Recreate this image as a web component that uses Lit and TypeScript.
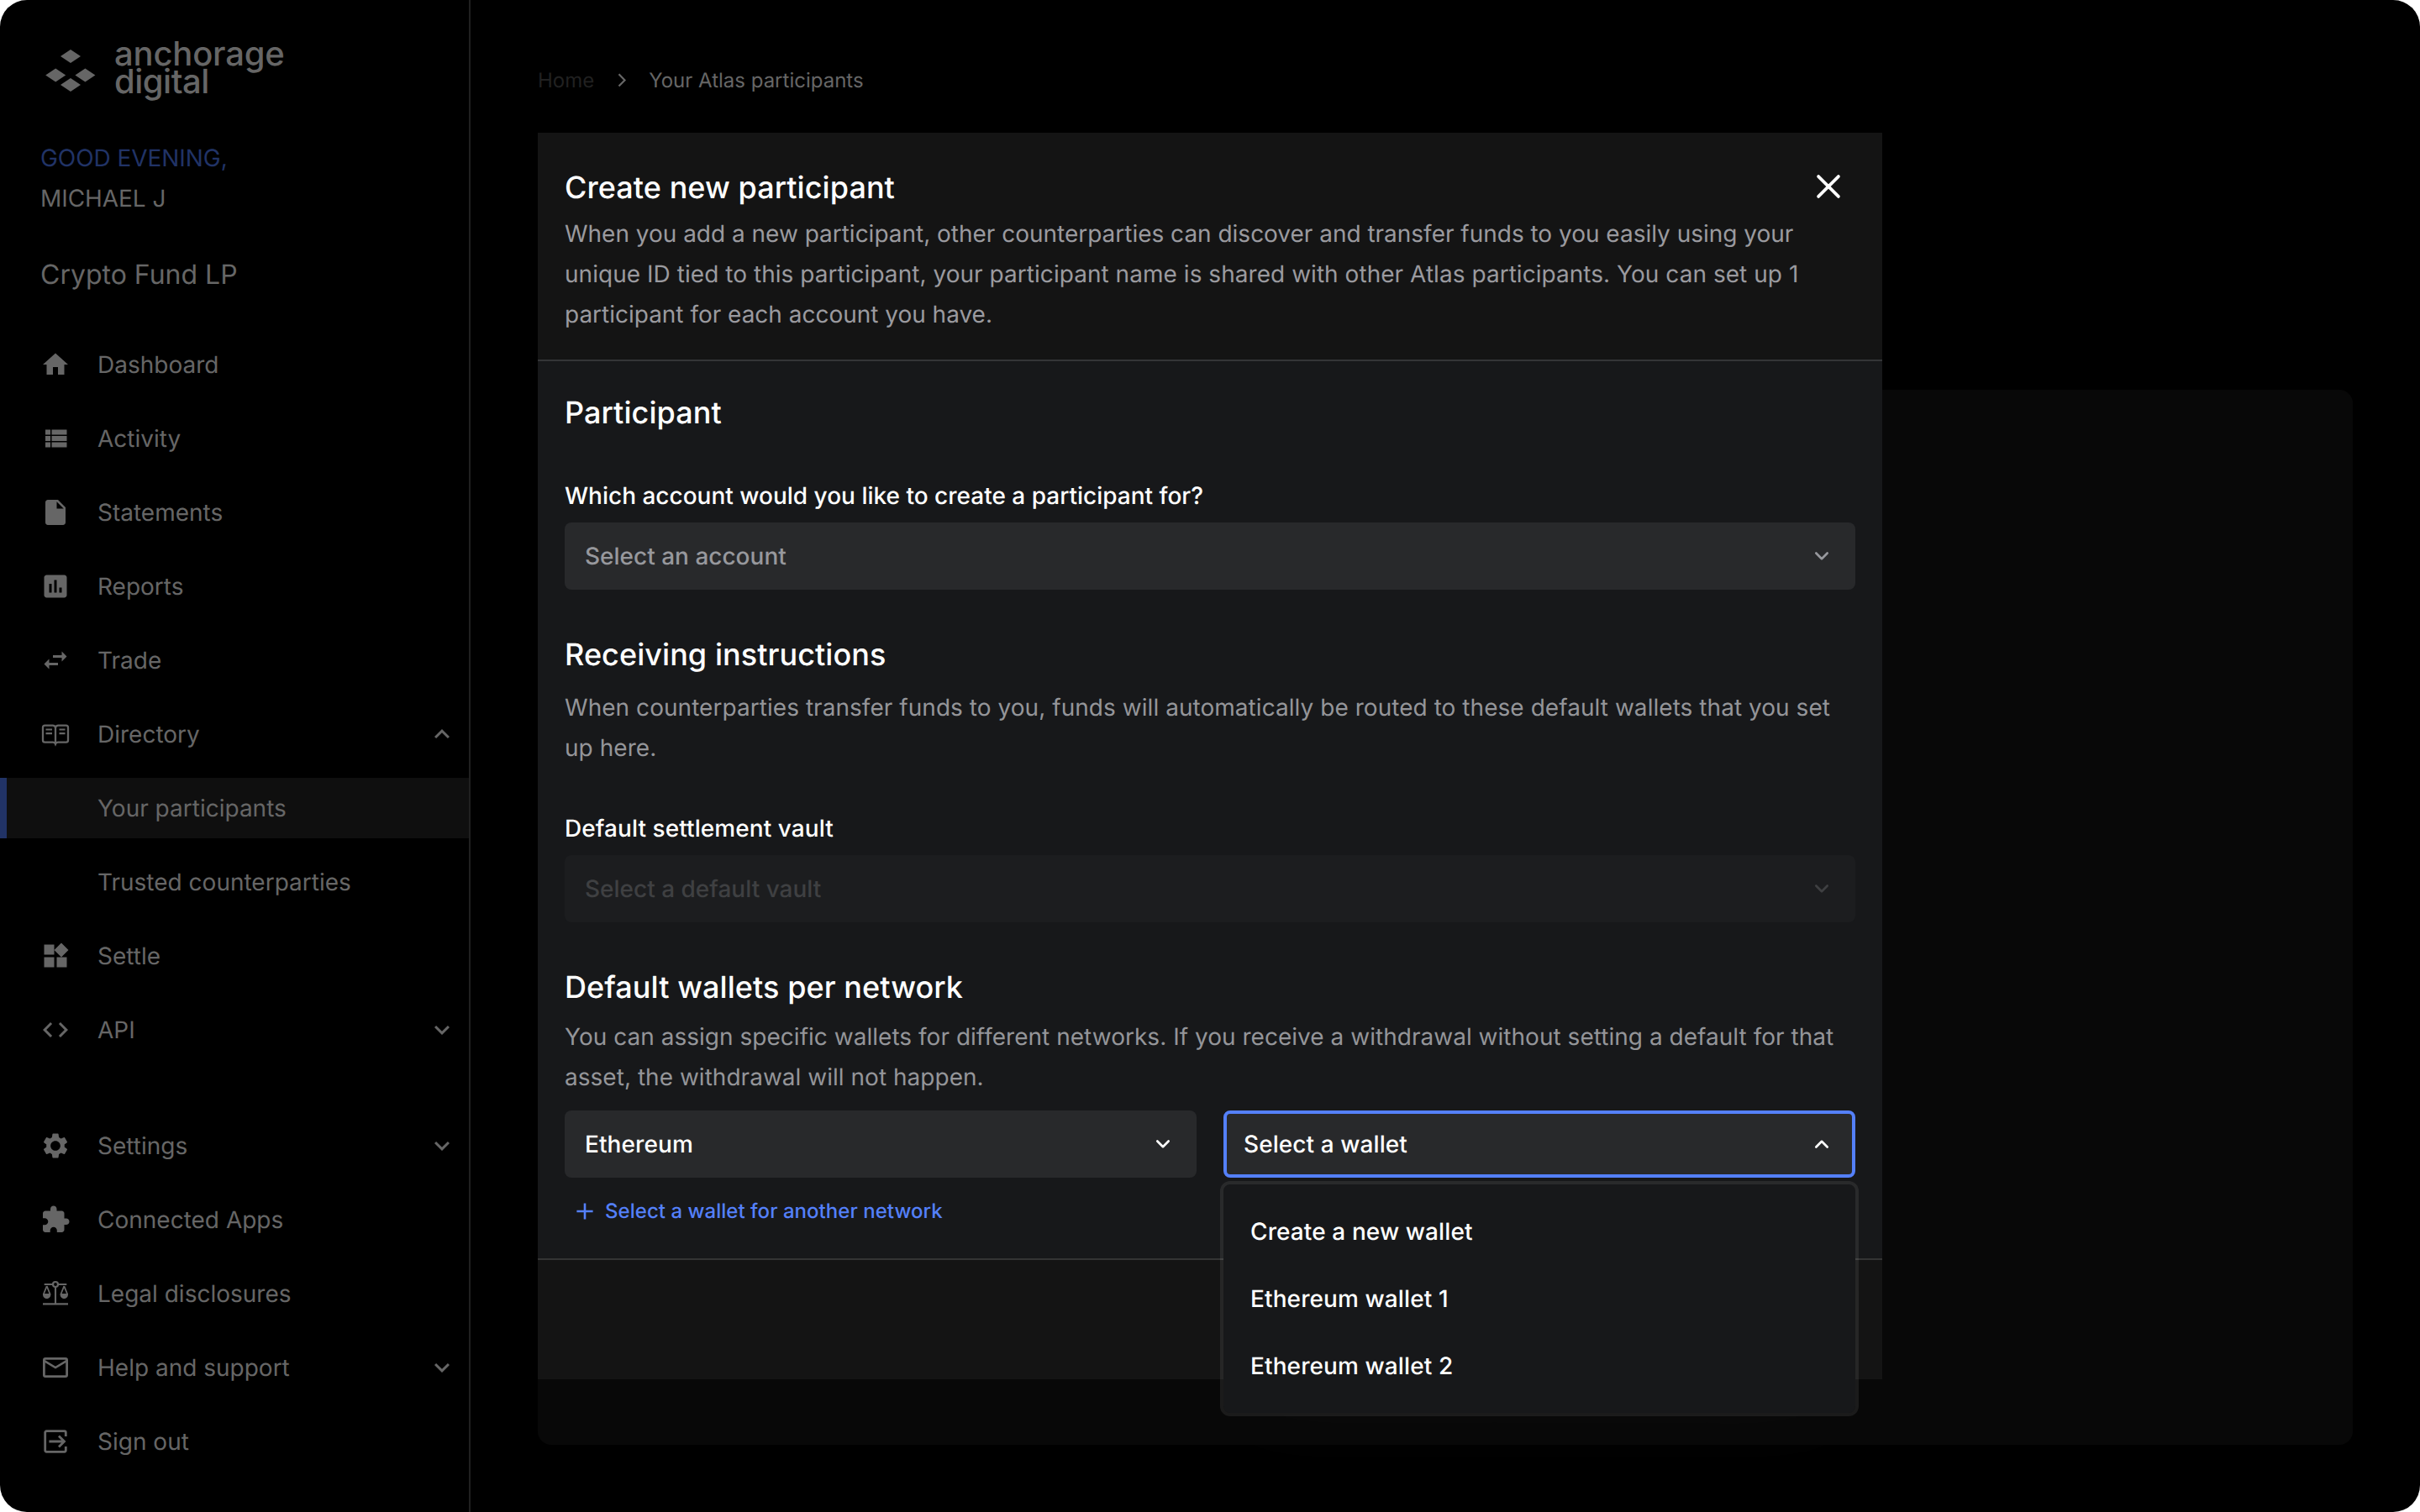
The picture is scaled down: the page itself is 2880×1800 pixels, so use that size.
import { LitElement, html, svg, css, nothing } from 'lit';
import { customElement, property } from 'lit/decorators.js';
import { classMap } from 'lit/directives/class-map.js';

interface NavItem {
  label: string;
  icon?: string;
  toggle?: 'up' | 'down';
  active?: boolean;
}

/* Filled glyphs are drawn on a 24 grid. */
const GLYPHS: Record<string, string> = {
  home: 'M10 20v-6h4v6h5v-8h3L12 3 2 12h3v8z',
  list: 'M4 14h4v-4H4v4zm0 5h4v-4H4v4zM4 9h4V5H4v4zm5 5h12v-4H9v4zm0 5h12v-4H9v4zM9 5v4h12V5H9z',
  file: 'M6 2c-1.1 0-1.99.9-1.99 2L4 20c0 1.1.89 2 1.99 2H18c1.1 0 2-.9 2-2V8l-6-6H6zm7 7V3.5L18.5 9H13z',
  chart:
    'M19 3H5c-1.1 0-2 .9-2 2v14c0 1.1.9 2 2 2h14c1.1 0 2-.9 2-2V5c0-1.1-.9-2-2-2zM9 17H7v-7h2v7zm4 0h-2V7h2v10zm4 0h-2v-4h2v4z',
  swap: 'M6.99 11L3 15l3.99 4v-3H14v-2H6.99v-3zM21 9l-3.99-4v3H10v2h7.01v3L21 9z',
  widgets: 'M13 13v8h8v-8h-8zM3 21h8v-8H3v8zM3 3v8h8V3H3zm13.66-1.31L11 7.34 16.66 13l5.66-5.66-5.66-5.65z',
  code: 'M9.4 16.6L4.8 12l4.6-4.6L8 6l-6 6 6 6 1.4-1.4zm5.2 0l4.6-4.6-4.6-4.6L16 6l6 6-6 6-1.4-1.4z',
  gear:
    'M19.14 12.94c.04-.3.06-.61.06-.94 0-.32-.02-.64-.07-.94l2.03-1.58c.18-.14.23-.41.12-.61l-1.92-3.32c-.12-.22-.37-.29-.59-.22l-2.39.96c-.5-.38-1.03-.7-1.62-.94l-.36-2.54c-.04-.24-.24-.41-.48-.41h-3.84c-.24 0-.43.17-.47.41l-.36 2.54c-.59.24-1.13.57-1.62.94l-2.39-.96c-.22-.08-.47 0-.59.22L2.74 8.87c-.12.21-.08.47.12.61l2.03 1.58c-.05.3-.09.63-.09.94s.02.64.07.94l-2.03 1.58c-.18.14-.23.41-.12.61l1.92 3.32c.12.22.37.29.59.22l2.39-.96c.5.38 1.03.7 1.62.94l.36 2.54c.05.24.24.41.48.41h3.84c.24 0 .44-.17.47-.41l.36-2.54c.59-.24 1.13-.56 1.62-.94l2.39.96c.22.08.47 0 .59-.22l1.92-3.32c.12-.22.07-.47-.12-.61l-2.01-1.58zM12 15.9c-2.15 0-3.9-1.75-3.9-3.9s1.75-3.9 3.9-3.9 3.9 1.75 3.9 3.9-1.75 3.9-3.9 3.9z',
  puzzle:
    'M20.5 11H19V7c0-1.1-.9-2-2-2h-4V3.5C13 2.12 11.88 1 10.5 1S8 2.12 8 3.5V5H4c-1.1 0-1.99.9-1.99 2v3.8H3.5c1.49 0 2.7 1.21 2.7 2.7s-1.21 2.7-2.7 2.7H2V20c0 1.1.9 2 2 2h3.8v-1.5c0-1.49 1.21-2.7 2.7-2.7 1.49 0 2.7 1.21 2.7 2.7V22H17c1.1 0 2-.9 2-2v-4h1.5c1.38 0 2.5-1.12 2.5-2.5S21.88 11 20.5 11z',
  down: 'M16.59 8.59L12 13.17 7.41 8.59 6 10l6 6 6-6z',
  up: 'M12 8l-6 6 1.41 1.41L12 10.83l4.59 4.58L18 14z',
};

/* Outline icons are drawn on a 36 grid. */
const OUTLINES: Record<string, unknown> = {
  book: svg`
    <path stroke-width="2.3" d="M18 28.600V10c-.6-1.600-1.600-2.300-3.200-2.300H5.400A2.400 2.400 0 0 0 3 10.100v15.200a2.400 2.400 0 0 0 2.400 2.400h9.400c1.600 0 2.600.5 3.200 2 .6-1.500 1.600-2 3.200-2h9.400a2.400 2.400 0 0 0 2.400-2.400V10.100a2.400 2.400 0 0 0-2.400-2.400h-9.400c-1.600 0-2.600.7-3.200 2.300"/>
    <path stroke-width="2.2" d="M6.500 12.500H14M6.500 17.200H14M22.500 12.500h7M22.500 17.200h7"/>`,
  scales: svg`
    <circle stroke-width="2.2" cx="18" cy="7" r="3"/>
    <path stroke-width="2.100" d="M4.700 7H15M21 7h10.300M18 10v20M3 30.400h30"/>
    <path stroke-width="1.800" d="M7.700 9L3.900 18.500M7.700 9l3.800 9.500M28.300 9l-3.800 9.500M28.300 9l3.800 9.500"/>
    <path fill="currentColor" stroke="none" d="M3 18h9.400c.4 3.400-1.700 6-4.700 6S2.600 21.400 3 18zM23.600 18h9.400c.4 3.400-1.700 6-4.700 6s-5.100-2.600-4.700-6z"/>`,
  mail: svg`
    <rect stroke-width="2.800" x="4.400" y="7.400" width="27.200" height="21.200" rx="1.600"/>
    <path stroke-width="2.600" d="M4.800 10.200L18 18l13.200-7.800"/>`,
  exit: svg`
    <path stroke-width="2.800" d="M30.300 12V7.400a1.700 1.700 0 0 0-1.700-1.700H7.400a1.700 1.700 0 0 0-1.700 1.700v21.200a1.700 1.700 0 0 0 1.700 1.700h21.200a1.700 1.700 0 0 0 1.700-1.700V24"/>
    <path stroke-width="2.800" d="M10.400 18h18M22 11.500l6.500 6.500-6.500 6.500"/>`,
};

@customElement('ui-icon')
class UiIcon extends LitElement {
  @property() name = '';

  static styles = css`
    :host {
      display: block;
      width: 36px;
      height: 36px;
      flex: none;
    }
    svg {
      display: block;
      width: 100%;
      height: 100%;
    }
  `;

  render() {
    const outline = OUTLINES[this.name];
    return outline
      ? html`<svg viewBox="0 0 36 36" fill="none" stroke="currentColor">${outline}</svg>`
      : html`<svg viewBox="0 0 24 24" fill="currentColor"><path d=${GLYPHS[this.name]}></path></svg>`;
  }
}

@customElement('side-nav')
class SideNav extends LitElement {
  private primary: NavItem[] = [
    { label: 'Dashboard', icon: 'home' },
    { label: 'Activity', icon: 'list' },
    { label: 'Statements', icon: 'file' },
    { label: 'Reports', icon: 'chart' },
    { label: 'Trade', icon: 'swap' },
    { label: 'Directory', icon: 'book', toggle: 'up' },
    { label: 'Your participants', active: true },
    { label: 'Trusted counterparties' },
    { label: 'Settle', icon: 'widgets' },
    { label: 'API', icon: 'code', toggle: 'down' },
  ];

  private secondary: NavItem[] = [
    { label: 'Settings', icon: 'gear', toggle: 'down' },
    { label: 'Connected Apps', icon: 'puzzle' },
    { label: 'Legal disclosures', icon: 'scales' },
    { label: 'Help and support', icon: 'mail', toggle: 'down' },
    { label: 'Sign out', icon: 'exit' },
  ];

  static styles = css`
    :host {
      display: flex;
      flex-direction: column;
      box-sizing: border-box;
      width: 560px;
      height: 1800px;
      padding-top: 47px;
      border-right: 2px solid #202020;
      color: #666;
      font-size: 28px;
    }
    .brand {
      display: flex;
      align-items: center;
      gap: 22px;
      height: 66px;
      padding-left: 54px;
    }
    .mark {
      display: block;
      width: 60px;
      height: 50px;
      margin-top: 8px;
    }
    .wordmark {
      font-size: 40px;
      font-weight: 500;
      line-height: 33px;
      letter-spacing: -0.2px;
    }
    .second {
      letter-spacing: -0.5px;
    }
    .greeting {
      margin-top: 51px;
      padding-left: 48px;
      line-height: 48px;
      letter-spacing: -0.06px;
    }
    .hello {
      color: #213366;
    }
    .fund {
      margin: 43px 0 47px;
      padding-left: 48px;
      font-size: 32px;
      line-height: 48px;
    }
    .group {
      display: flex;
      flex-direction: column;
      gap: 16px;
    }
    .group + .group {
      margin-top: 66px;
    }
    .item {
      display: flex;
      align-items: center;
      box-sizing: border-box;
      height: 72px;
      padding: 0 14px 0 40px;
      border-left: 8px solid transparent;
    }
    .item.active {
      background: #0f0f0f;
      border-left-color: #213366;
    }
    .slot {
      width: 68px;
      flex: none;
    }
    .label {
      flex: 1;
    }
  `;

  private row(item: NavItem) {
    return html`<div class=${classMap({ item: true, active: !!item.active })}>
      <span class="slot">${item.icon ? html`<ui-icon name=${item.icon}></ui-icon>` : nothing}</span>
      <span class="label">${item.label}</span>
      ${item.toggle ? html`<ui-icon name=${item.toggle}></ui-icon>` : nothing}
    </div>`;
  }

  render() {
    return html`
      <div class="brand">
        <svg class="mark" viewBox="0 0 60 50" fill="currentColor">
          <path d="M30 0l12 8-12 8-12-8zM12.200 22.500l12 8-12 8-12-8zM47.400 22.500l12 8-12 8-12-8zM30 34l12 8-12 8-12-8z"></path>
        </svg>
        <div class="wordmark">anchorage<br /><span class="second">digital</span></div>
      </div>
      <div class="greeting">
        <div class="hello">GOOD EVENING,</div>
        <div>MICHAEL J</div>
      </div>
      <div class="fund">Crypto Fund LP</div>
      <div class="group">${this.primary.map((i) => this.row(i))}</div>
      <div class="group">${this.secondary.map((i) => this.row(i))}</div>
    `;
  }
}

@customElement('select-box')
class SelectBox extends LitElement {
  @property() text = '';
  @property({ type: Boolean, reflect: true }) filled = false;
  @property({ type: Boolean, reflect: true }) open = false;
  @property({ type: Boolean, reflect: true }) disabled = false;
  @property({ attribute: false }) options: string[] = [];

  static styles = css`
    :host {
      display: block;
      position: relative;
      flex: 1;
      font-size: 28px;
      font-weight: 500;
    }
    .field {
      display: flex;
      align-items: center;
      justify-content: space-between;
      box-sizing: border-box;
      height: 80px;
      padding: 0 24px;
      border-radius: 8px;
      background: #28292b;
      color: #97989d;
    }
    :host([filled]) .field {
      color: #fff;
      letter-spacing: 0.08px;
    }
    :host([open]) .field {
      padding: 0 20px;
      border: 4px solid #5480fa;
    }
    :host([disabled]) .field {
      background: #1c1d1f;
      color: #3f4042;
    }
    .caret {
      width: 32px;
      height: 32px;
    }
    .menu {
      position: absolute;
      z-index: 2;
      top: 84px;
      left: -4px;
      right: -4px;
      box-sizing: border-box;
      height: 280px;
      padding: 16px 32px;
      border: 4px solid rgba(255, 255, 255, 0.08);
      border-radius: 12px;
      background: #17181a;
      background-clip: padding-box;
      box-shadow: 0 8px 120px rgba(255, 255, 255, 0.015);
      color: #fff;
      letter-spacing: 0.1px;
    }
    .option {
      line-height: 80px;
    }
  `;

  render() {
    return html`
      <div class="field">
        <span>${this.text}</span>
        <svg
          class="caret"
          viewBox="0 0 24 24"
          fill="none"
          stroke="currentColor"
          stroke-width="2"
          stroke-linecap="round"
          stroke-linejoin="round"
        >
          <path d=${this.open ? 'M7 14.600l5-5 5 5' : 'M7 9.400l5 5 5-5'}></path>
        </svg>
      </div>
      ${this.open
        ? html`<div class="menu">${this.options.map((o) => html`<div class="option">${o}</div>`)}</div>`
        : nothing}
    `;
  }
}

@customElement('participant-dialog')
class ParticipantDialog extends LitElement {
  private wallets = ['Create a new wallet', 'Ethereum wallet 1', 'Ethereum wallet 2'];

  static styles = css`
    :host {
      display: block;
      width: 1600px;
      color: #fff;
      font-size: 28px;
    }
    .head {
      display: flex;
      align-items: flex-start;
      justify-content: space-between;
      box-sizing: border-box;
      height: 272px;
      padding: 41px 48px 0 32px;
      border-bottom: 2px solid #343537;
      background: #141414;
    }
    .intro {
      width: 1488px;
    }
    h2,
    h3,
    p {
      margin: 0;
    }
    h2,
    h3 {
      font-size: 36px;
      font-weight: 500;
      line-height: 48px;
      letter-spacing: 0.06px;
    }
    p {
      color: #949599;
      line-height: 48px;
    }
    .intro p {
      margin-top: 7px;
      color: #9a9a9f;
      letter-spacing: -0.015px;
    }
    .loose {
      letter-spacing: 0.04px;
    }
    .close {
      width: 32px;
      height: 32px;
      margin: 7px 0 0 -40px;
      flex: none;
    }
    .body {
      padding: 37px 32px 36px;
      background: #17181a;
    }
    .label {
      margin-bottom: 12px;
      font-weight: 500;
      line-height: 40px;
    }
    .account {
      margin-top: 55px;
    }
    .receiving,
    .network {
      margin-top: 53px;
    }
    .receiving p {
      margin: 15px 0 52px;
      letter-spacing: 0.045px;
    }
    .receiving .label {
      letter-spacing: 0.07px;
    }
    .network p {
      margin: 11px 0 16px;
      letter-spacing: 0.025px;
    }
    .pair {
      display: flex;
      gap: 32px;
    }
    .add {
      display: flex;
      align-items: center;
      gap: 12px;
      margin-top: 20px;
      padding-left: 12px;
      color: #5480fa;
      font-size: 24px;
      font-weight: 500;
      line-height: 40px;
      letter-spacing: 0.04px;
    }
    .plus {
      width: 24px;
      height: 24px;
    }
    .foot {
      box-sizing: border-box;
      height: 144px;
      border-top: 2px solid #343434;
      background: #141414;
    }
  `;

  render() {
    return html`
      <div class="head">
        <div class="intro">
          <h2>Create new participant</h2>
          <p>
            When you add a new participant, other counterparties can discover and transfer funds to you easily using
            your<br /><span class="loose"
              >unique ID tied to this participant, your participant name is shared with other Atlas participants. You
              can set up 1</span
            ><br />participant for each account you have.
          </p>
        </div>
        <svg class="close" viewBox="0 0 32 32" fill="none" stroke="currentColor" stroke-width="3.800" stroke-linecap="round">
          <path d="M4.100 4.100l23.800 23.800M27.900 4.100L4.100 27.900"></path>
        </svg>
      </div>
      <div class="body">
        <h3>Participant</h3>
        <div class="account">
          <div class="label">Which account would you like to create a participant for?</div>
          <select-box text="Select an account"></select-box>
        </div>
        <div class="receiving">
          <h3>Receiving instructions</h3>
          <p>
            When counterparties transfer funds to you, funds will automatically be routed to these default wallets that
            you set<br />up here.
          </p>
          <div class="label">Default settlement vault</div>
          <select-box text="Select a default vault" disabled></select-box>
        </div>
        <div class="network">
          <h3>Default wallets per network</h3>
          <p>
            You can assign specific wallets for different networks. If you receive a withdrawal without setting a
            default for that<br />asset, the withdrawal will not happen.
          </p>
          <div class="pair">
            <select-box text="Ethereum" filled></select-box>
            <select-box text="Select a wallet" filled open .options=${this.wallets}></select-box>
          </div>
          <div class="add">
            <svg class="plus" viewBox="0 0 24 24" fill="none" stroke="currentColor" stroke-width="2.600">
              <path d="M12 2.400v19.200M2.400 12h19.200"></path>
            </svg>
            <span>Select a wallet for another network</span>
          </div>
        </div>
      </div>
      <div class="foot"></div>
    `;
  }
}

@customElement('app-root')
class AppRoot extends LitElement {
  static styles = css`
    :host {
      display: block;
      width: 2880px;
      height: 1800px;
      overflow: hidden;
      background: #fff;
      font-family: Inter, 'Liberation Sans', sans-serif;
      text-rendering: geometricPrecision;
    }
    .window {
      position: relative;
      display: flex;
      height: 1800px;
      border-radius: 32px;
      overflow: hidden;
      background: #000;
    }
    .main {
      flex: 1;
      padding: 75px 80px 0;
    }
    .crumbs {
      display: flex;
      align-items: center;
      gap: 20.5px;
      height: 40px;
      color: #666;
      font-size: 24px;
    }
    .home {
      color: #212121;
    }
    .sep {
      width: 24px;
      height: 24px;
    }
    .card {
      height: 1256px;
      margin-top: 349px;
      border-radius: 16px;
      background: #080808;
    }
    .dialog {
      position: absolute;
      top: 158px;
      left: 640px;
    }
  `;

  render() {
    return html`
      <div class="window">
        <side-nav></side-nav>
        <div class="main">
          <div class="crumbs">
            <span class="home">Home</span>
            <svg class="sep" viewBox="0 0 24 24" fill="none" stroke="currentColor" stroke-width="2.200">
              <path d="M8.500 5.200l7 7.200-7 7.200"></path>
            </svg>
            <span>Your Atlas participants</span>
          </div>
          <div class="card"></div>
        </div>
        <participant-dialog class="dialog"></participant-dialog>
      </div>
    `;
  }
}
